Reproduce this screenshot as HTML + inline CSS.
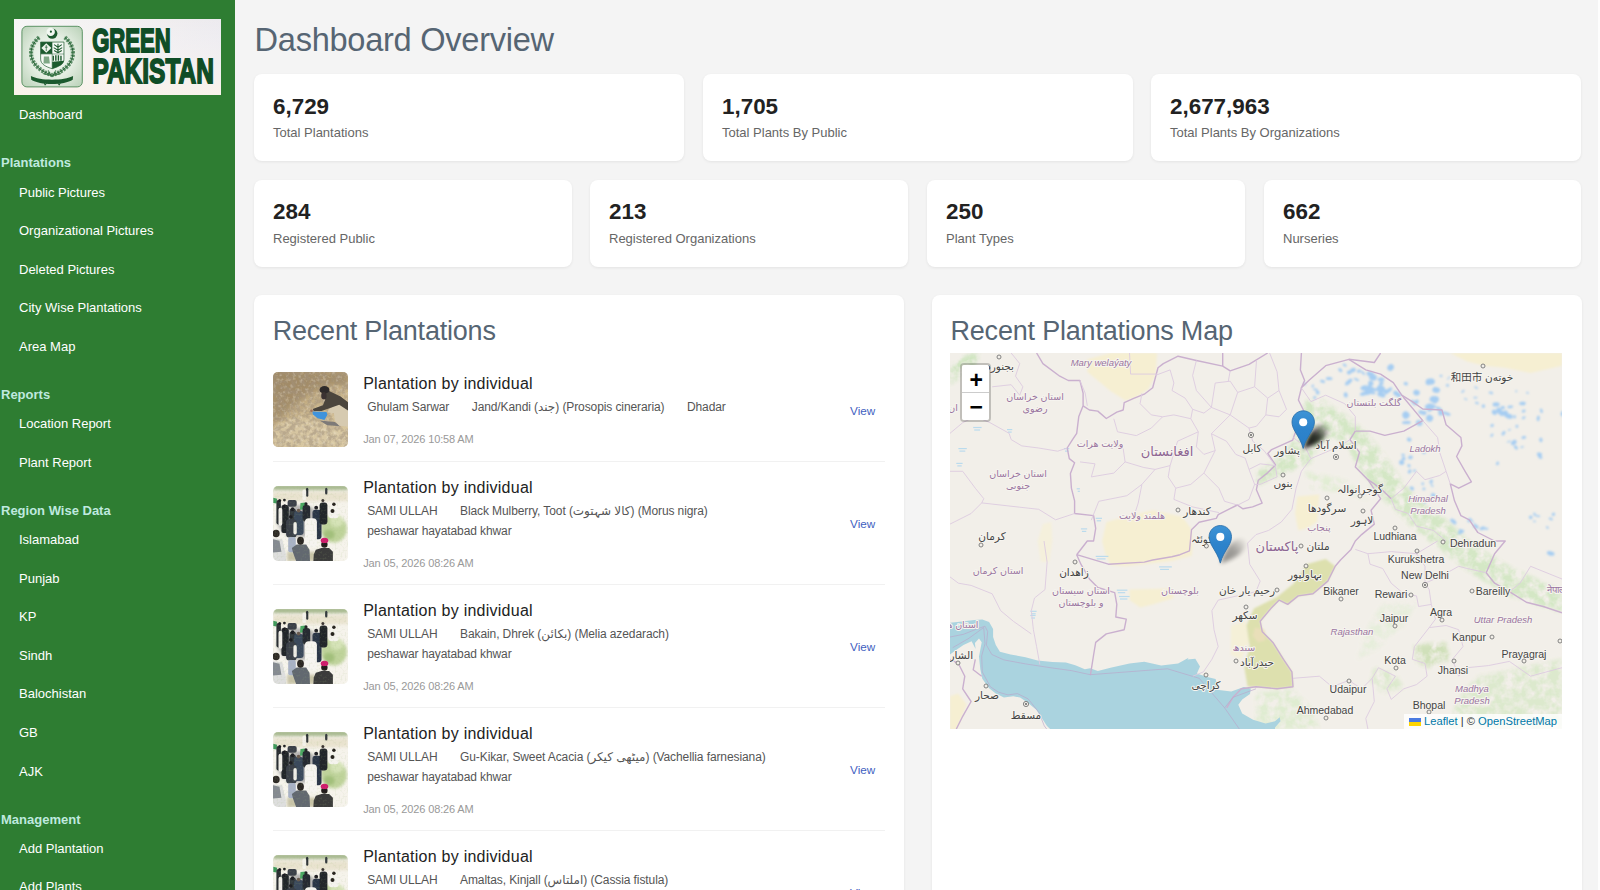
<!DOCTYPE html>
<html lang="en">
<head>
<meta charset="utf-8">
<title>Dashboard Overview</title>
<style>
*{box-sizing:border-box;margin:0;padding:0}
html,body{width:1600px;height:890px;overflow:hidden;background:#f4f4f4;font-family:"Liberation Sans","DejaVu Sans",sans-serif;color:#333}
body{position:relative}
#edge{position:absolute;right:0;top:0;width:2px;height:890px;background:#fdfdfd}
#side{position:absolute;left:0;top:0;width:235px;height:890px;background:#2e7d32;overflow:hidden}
#logo{position:absolute;left:14px;top:19px;width:207px;height:76px;overflow:hidden}
#side a{position:absolute;left:19px;color:#fff;font-size:13px;text-decoration:none;white-space:nowrap;line-height:16px}
#side h4{position:absolute;left:1px;color:#bfe9df;font-size:13px;font-weight:bold;white-space:nowrap;line-height:16px}
h1{position:absolute;left:254.6px;top:17.6px;font-size:32.6px;letter-spacing:-.28px;font-weight:normal;color:#566573;line-height:44px;white-space:nowrap}
.card{position:absolute;background:#fff;border-radius:8px;box-shadow:0 1px 3px rgba(0,0,0,.07);height:87px}
.card b{position:absolute;left:19px;top:19.7px;font-size:22.4px;line-height:26px;color:#222;white-space:nowrap}
.card span{position:absolute;left:19px;top:50px;font-size:13px;line-height:18px;color:#666;white-space:nowrap}
.panel{position:absolute;background:#fff;border-radius:8px;box-shadow:0 1px 3px rgba(0,0,0,.07);top:295px;height:620px;width:649.5px}
.panel h2{position:absolute;left:18.5px;top:18px;font-size:27px;font-weight:normal;color:#566573;line-height:36px;white-space:nowrap;letter-spacing:-.2px}
.it{position:absolute;left:19px;width:612px;border-bottom:1px solid #f1f1f1}
.it .th{position:absolute;left:0;width:75px;height:75px;border-radius:5px;overflow:hidden}
.it h3{position:absolute;left:90px;top:14px;letter-spacing:.25px;font-size:16px;font-weight:normal;color:#222;line-height:24px;white-space:nowrap}
.it .m{position:absolute;left:94px;letter-spacing:-.1px;font-size:12px;color:#555;line-height:20px;white-space:nowrap}
.it .m span{margin-right:22.5px}
.it .dt{position:absolute;left:90px;letter-spacing:-.13px;font-size:11px;color:#999;line-height:16px;white-space:nowrap}
.it .vw{position:absolute;right:10px;font-size:11.7px;color:#3f5fbf;line-height:16px;text-decoration:none}
#mapbox{position:absolute;left:18px;top:58px;width:612px;height:376px;overflow:hidden;background:#f2efe9}
#zoom{position:absolute;left:10px;top:10px;width:31px;height:59px;border:2px solid rgba(0,0,0,.2);border-radius:4px;background-clip:padding-box}
#zoom div{width:27px;height:27px;background:#fff;text-align:center;font:bold 23px/27px "Liberation Sans","DejaVu Sans",sans-serif;color:#000;position:relative;text-indent:1.5px}
#zoom div:first-child{border-bottom:1px solid #ccc;border-radius:2px 2px 0 0;height:28px;line-height:30px}
#zoom div:last-child{border-radius:0 0 2px 2px;line-height:28px}
#zoom i{position:absolute;background:#000;display:block}
#attr{position:absolute;right:0;bottom:0;height:15px;width:158px;background:rgba(255,255,255,.8);font-size:11.2px;line-height:15px;color:#333;white-space:nowrap;padding-left:20px}
#attr a{color:#0078a8;text-decoration:none}
#attr svg{position:absolute;left:5px;top:4px}
</style>
</head>
<body>
<div id="side">
  <div id="logo"><svg width="207" height="76" viewBox="0 0 207 76"><defs>
<linearGradient id="lg1" x1="0" y1="0" x2="1" y2=".6"><stop offset="0" stop-color="#f7f6f6"/><stop offset=".5" stop-color="#f1eeef"/><stop offset="1" stop-color="#e7e6ee"/></linearGradient>
<linearGradient id="lg2" x1="0" y1="0" x2="0" y2="1"><stop offset="0" stop-color="#fff" stop-opacity="0"/><stop offset="1" stop-color="#fbf3ea" stop-opacity=".9"/></linearGradient>
<radialGradient id="lg3" cx="50%" cy="50%" r="65%"><stop offset="0" stop-color="#fbfdfb"/><stop offset=".55" stop-color="#e3ede1"/><stop offset="1" stop-color="#bfd5bd"/></radialGradient>
<filter id="lgb"><feGaussianBlur stdDeviation=".35"/></filter>
</defs><rect width="207" height="76" fill="url(#lg1)"/><rect width="207" height="76" fill="url(#lg2)"/><rect x="7.9" y="7.3" width="60.4" height="60.6" rx="5" fill="url(#lg3)" stroke="#4f8a58" stroke-width=".9"/><g filter="url(#lgb)"><circle cx="38.2" cy="14.6" r="5.2" fill="#1d5a2e"/><circle cx="36.7" cy="12.9" r="4.2" fill="#f3f8f2"/><circle cx="36.89" cy="12.64" r="1.1" fill="#1d5a2e"/><path d="M25.19 18.36 C12.81 28.18 12.81 47.82 37.57 55.94" fill="none" stroke="#2f6f3e" stroke-width="4.2" stroke-dasharray="2.2 1.1" opacity=".75"/><path d="M50.81 18.36 C63.19 28.18 63.19 47.82 38.43 55.94" fill="none" stroke="#2f6f3e" stroke-width="4.2" stroke-dasharray="2.2 1.1" opacity=".75"/><path d="M25.19 18.36 C12.81 28.18 12.81 47.82 37.57 55.94" fill="none" stroke="#1d5a2e" stroke-width=".9"/><path d="M50.81 18.36 C63.19 28.18 63.19 47.82 38.43 55.94" fill="none" stroke="#1d5a2e" stroke-width=".9"/><path d="M26.64 23.06 H49.96 V40.14 C49.96 45.26 44.41 47.82 38.17 49.7 C32.02 47.82 26.64 45.26 26.64 40.14Z" fill="#f7faf6" stroke="#1d5a2e" stroke-width=".7"/><rect x="26.64" y="23.06" width="11.36" height="11.78" fill="#1d5a2e"/><path d="M32.28 24.34 L37.4 29.04 L32.28 33.73 L27.33 29.04Z" fill="#eef4ec"/><path d="M32.28 26.05 V32.02 M30.91 28.18 H33.65" stroke="#1d5a2e" stroke-width=".7"/><path d="M43.98 24.77 V34.16 M43.98 28.18 L40.14 25.62 M43.98 28.18 L47.82 25.62 M43.98 31.17 L39.71 28.61 M43.98 31.17 L48.25 28.61 M43.98 33.73 L40.14 31.6 M43.98 33.73 L47.82 31.6" stroke="#1d5a2e" stroke-width="1.1" fill="none"/><path d="M29.89 37.57 H35.01 L35.87 44.41 H29.46Z" fill="#7fa886"/><path d="M38.17 42.7 L49.96 41.84 C49.53 45.69 44.41 47.82 38.17 49.7Z" fill="#1d5a2e"/><path d="M39.28 36.72 V41.84 M41.84 36.29 V41.84 M44.41 36.29 V41.84 M46.97 36.72 V41.67" stroke="#1d5a2e" stroke-width="1.4"/><path d="M38.17 23.06 V49.7 M26.64 35.01 H49.96" stroke="#1d5a2e" stroke-width=".5"/><path d="M16.91 57.05 C25.62 61.91 50.38 61.91 59.09 57.05 L58.75 60.8 C50.38 66.44 25.62 66.44 17.25 60.8Z" fill="#1d5a2e"/><path d="M29.89 63.19 L31.17 66.18 L32.88 63.62 M43.55 63.62 L45.26 66.18 L46.54 63.19" stroke="#1d5a2e" stroke-width="1" fill="none"/><path d="M34.16 51.24 L38.0 58.07 L41.84 51.24 M29.04 54.65 L38.0 56.79 L46.97 54.65" stroke="#2f6f3e" stroke-width=".9" fill="none"/></g><g font-family="'Liberation Sans',sans-serif" font-weight="bold" fill="#0f4d26" stroke="#0f4d26" stroke-width="1.8" stroke-linejoin="miter"><text x="78.2" y="33.3" font-size="33.2" textLength="78.5" lengthAdjust="spacingAndGlyphs">GREEN</text><text x="78.4" y="64.3" font-size="35" textLength="121.5" lengthAdjust="spacingAndGlyphs">PAKISTAN</text></g></svg></div>
  <a style="top:107.4px">Dashboard</a>
  <h4 style="top:155.4px">Plantations</h4>
  <a style="top:184.6px">Public Pictures</a>
  <a style="top:223.2px">Organizational Pictures</a>
  <a style="top:261.8px">Deleted Pictures</a>
  <a style="top:300.4px">City Wise Plantations</a>
  <a style="top:339px">Area Map</a>
  <h4 style="top:387px">Reports</h4>
  <a style="top:416.2px">Location Report</a>
  <a style="top:454.8px">Plant Report</a>
  <h4 style="top:502.8px">Region Wise Data</h4>
  <a style="top:532px">Islamabad</a>
  <a style="top:570.6px">Punjab</a>
  <a style="top:609.2px">KP</a>
  <a style="top:647.8px">Sindh</a>
  <a style="top:686.4px">Balochistan</a>
  <a style="top:725px">GB</a>
  <a style="top:763.6px">AJK</a>
  <h4 style="top:811.6px">Management</h4>
  <a style="top:840.8px">Add Plantation</a>
  <a style="top:879.4px">Add Plants</a>
</div>
<h1>Dashboard Overview</h1>
<div class="card" style="left:254px;top:74px;width:430px"><b>6,729</b><span>Total Plantations</span></div>
<div class="card" style="left:703px;top:74px;width:430px"><b>1,705</b><span>Total Plants By Public</span></div>
<div class="card" style="left:1151px;top:74px;width:430px"><b>2,677,963</b><span>Total Plants By Organizations</span></div>
<div class="card" style="left:254px;top:179.6px;width:318px"><b>284</b><span>Registered Public</span></div>
<div class="card" style="left:590px;top:179.6px;width:318px"><b>213</b><span>Registered Organizations</span></div>
<div class="card" style="left:927px;top:179.6px;width:318px"><b>250</b><span>Plant Types</span></div>
<div class="card" style="left:1264px;top:179.6px;width:317px"><b>662</b><span>Nurseries</span></div>

<div class="panel" id="pl" style="left:254.2px">
  <h2>Recent Plantations</h2>
  <div class="it" style="top:62.6px;height:104px">
    <div class="th" style="top:14.4px"><svg width="75" height="75" viewBox="0 0 75 75"><defs><linearGradient id="t1g" x1="0" y1="0" x2=".6" y2="1"><stop offset="0" stop-color="#a8916a"/><stop offset=".45" stop-color="#c2ac82"/><stop offset="1" stop-color="#d9c79e"/></linearGradient><filter id="t1n" x="0" y="0" width="100%" height="100%"><feTurbulence type="fractalNoise" baseFrequency=".22" numOctaves="3" seed="3"/><feColorMatrix values="0 0 0 0 .36  0 0 0 0 .29  0 0 0 0 .21  0 0 0 3.4 -1.2"/></filter><filter id="t1m" x="0" y="0" width="100%" height="100%"><feTurbulence type="fractalNoise" baseFrequency=".3" numOctaves="2" seed="11"/><feColorMatrix values="0 0 0 0 .93  0 0 0 0 .87  0 0 0 0 .74  0 0 0 3 -1.45"/></filter><filter id="t1b"><feGaussianBlur stdDeviation=".7"/></filter><filter id="t1c"><feGaussianBlur stdDeviation="2.5"/></filter></defs><rect width="75" height="75" fill="url(#t1g)"/><polygon points="-0.0,-0.0 75.0,-0.0 75.0,13.1 56.1,13.1 35.1,21.7 17.0,36.1 -0.0,53.3" fill="#9a8462" filter="url(#t1c)" opacity=".7"/><polygon points="-0.0,54.2 23.7,44.7 44.7,48.5 75.0,61.9 75.0,75.2 -0.0,75.2" fill="#d9c9a6" filter="url(#t1c)" opacity=".8"/><rect width="75" height="75" filter="url(#t1n)" opacity=".55"/><rect width="75" height="75" filter="url(#t1m)" opacity=".3"/><g filter="url(#t1b)"><polygon points="46.6,48.5 61.9,49.9 67.6,54.2 54.2,53.3" fill="#7d7a78" /><polygon points="61.9,33.2 68.5,31.8 75.0,37.0 75.0,54.7 66.2,53.7 61.9,49.0 60.9,41.3 54.2,40.4 56.1,37.0" fill="#d6cab0" /><polygon points="48.5,21.7 56.1,18.9 67.6,24.6 75.0,30.3 75.0,38.5 66.2,32.7 57.1,36.1 48.5,39.1 40.8,39.1 39.7,37.0 49.9,33.2 52.3,27.5" fill="#4b453d" /><ellipse cx="51.5" cy="17.9" rx="5.0" ry="3.8" fill="#2d2a2a" /><ellipse cx="50.9" cy="23.7" rx="2.7" ry="3.8" fill="#3a3230" /><polygon points="39.4,39.4 53.5,39.9 54.4,42.8 51.4,48.1 44.7,46.2 39.9,42.4" fill="#3f93dc" /><circle cx="38.5" cy="38.7" r="1.3" fill="#a0705a"/></g></svg></div>
    <h3>Plantation by individual</h3>
    <div class="m" style="top:39px"><span>Ghulam Sarwar</span><span>Jand/Kandi (جند) (Prosopis cineraria)</span><span>Dhadar</span></div>
    <div class="dt" style="top:73px">Jan 07, 2026 10:58 AM</div>
    <a class="vw" style="top:45px">View</a>
  </div>
  <div class="it" style="top:166.6px;height:123.2px">
    <div class="th" style="top:24px"><svg width="75" height="75" viewBox="0 0 75 75"><defs><filter id="t2b"><feGaussianBlur stdDeviation=".75"/></filter><filter id="t2c"><feGaussianBlur stdDeviation="1.6"/></filter><filter id="t2n" x="0" y="0" width="100%" height="100%"><feTurbulence type="fractalNoise" baseFrequency=".5" numOctaves="2" seed="8"/><feColorMatrix values="0 0 0 0 .35  0 0 0 0 .5  0 0 0 0 .2  0 0 0 1.3 -.62"/></filter></defs><rect width="75" height="75" fill="#f6f3ec"/><g filter="url(#t2c)"><rect x="-0.0" y="-1.2" width="75.1" height="5.3" rx="0" fill="#93aa78" opacity=".8"/><rect x="-0.0" y="6.0" width="75.1" height="9.1" rx="0" fill="#e6dfc8" opacity=".8"/><ellipse cx="60.9" cy="42.8" rx="12.9" ry="13.8" fill="#bfd39b" /><ellipse cx="63.8" cy="35.1" rx="6.7" ry="5.7" fill="#d6e3b8" /><ellipse cx="56.1" cy="48.5" rx="5.7" ry="4.8" fill="#a3c07c" /><ellipse cx="26.5" cy="35.1" rx="22.0" ry="16.2" fill="#3a3f48" opacity=".35"/><rect x="14.1" y="65.7" width="28.7" height="9.6" rx="0" fill="#c9c4a9" /></g><g filter="url(#t2b)"><rect x="33.0" y="1.7" width="2.3" height="9.1" rx="1.5" fill="#2c3036" /><rect x="52.1" y="1.7" width="2.3" height="6.7" rx="1.5" fill="#353a40" /><rect x="29.4" y="3.6" width="3.8" height="10.5" rx="1.5" fill="#f3f1ea" /><polygon points="0.3,11.7 4.1,12.7 3.6,17.4 0.3,17.0" fill="#3f9a5c" /><polygon points="27.5,17.0 32.7,16.5 31.8,23.2 27.0,23.7" fill="#4aa862" /><rect x="3.4" y="14.1" width="4.5" height="24.4" rx="2" fill="#2a2d33" /><circle cx="6.7" cy="14.6" r="1.5" fill="#1f1f22"/><rect x="8.4" y="18.9" width="7.4" height="28.2" rx="2" fill="#23262c" /><circle cx="11.4" cy="14.1" r="1.4" fill="#1f1f22"/><circle cx="11.7" cy="20.0" r="1.7" fill="#1d1d20"/><rect x="14.6" y="14.1" width="9.1" height="6.7" rx="2" fill="#3b3f48" /><rect x="16.5" y="22.7" width="6.4" height="13.4" rx="2" fill="#33373d" /><circle cx="19.6" cy="23.2" r="1.9" fill="#1f1f22"/><rect x="21.0" y="25.1" width="9.6" height="23.9" rx="3" fill="#3a485b" /><circle cx="25.6" cy="24.6" r="1.9" fill="#6a5a50"/><rect x="29.6" y="18.9" width="7.6" height="16.7" rx="3" fill="#262a30" /><circle cx="33.0" cy="17.9" r="1.6" fill="#1f1f22"/><rect x="39.5" y="23.7" width="9.0" height="29.6" rx="3" fill="#2a3447" /><circle cx="43.2" cy="21.7" r="1.9" fill="#1f1f22"/><rect x="46.6" y="16.5" width="7.8" height="22.0" rx="3" fill="#22252b" /><circle cx="49.9" cy="14.6" r="1.5" fill="#3a3430"/><rect x="55.6" y="20.8" width="10.0" height="11.5" rx="3" fill="#f5f3ee" /><circle cx="60.9" cy="18.2" r="1.7" fill="#25221f"/><circle cx="59.5" cy="25.1" r="2.0" fill="#25221f"/><rect x="5.5" y="21.7" width="3.8" height="18.1" rx="2" fill="#f1efe9" /><rect x="13.1" y="33.2" width="10.5" height="18.3" rx="3" fill="#3a4049" /><rect x="20.4" y="36.1" width="3.4" height="12.4" rx="2" fill="#f0eee8" /><rect x="15.2" y="50.9" width="7.6" height="15.3" rx="2" fill="#a9b2c6" /><circle cx="17.9" cy="30.8" r="1.9" fill="#1f1f22"/><rect x="31.9" y="32.2" width="12.0" height="28.7" rx="4" fill="#f6f4f0" /><ellipse cx="51.4" cy="58.5" rx="3.2" ry="3.2" fill="#241f1d" /><ellipse cx="51.5" cy="54.4" rx="3.8" ry="2.7" fill="#cf1f6c" /><polygon points="42.8,63.8 48.5,61.9 56.1,61.9 59.9,65.7 59.9,75.2 40.4,75.2 40.8,68.5" fill="#3a3a3a" /><polygon points="18.9,61.9 23.7,58.5 33.2,58.5 36.5,63.8 37.0,75.2 23.2,75.2 20.0,66.6" fill="#62686f" /><ellipse cx="27.5" cy="54.7" rx="3.4" ry="4.0" fill="#2b2724" /><polygon points="-0.0,52.3 9.3,53.3 12.7,67.6 13.1,75.2 -0.0,75.2" fill="#dedede" /><polygon points="-0.0,53.3 6.5,54.7 8.4,65.7 -0.0,66.6" fill="#868b92" /><ellipse cx="3.1" cy="47.5" rx="3.6" ry="3.8" fill="#2e2a28" /></g><rect width="75" height="75" filter="url(#t2n)" opacity=".35"/></svg></div>
    <h3>Plantation by individual</h3>
    <div class="m" style="top:39px"><span>SAMI ULLAH</span><span>Black Mulberry, Toot (کالا شہتوت) (Morus nigra)</span><br>peshawar hayatabad khwar</div>
    <div class="dt" style="top:93px">Jan 05, 2026 08:26 AM</div>
    <a class="vw" style="top:54px">View</a>
  </div>
  <div class="it" style="top:289.8px;height:123.2px">
    <div class="th" style="top:24px"><svg width="75" height="75" viewBox="0 0 75 75"><defs><filter id="t2b"><feGaussianBlur stdDeviation=".75"/></filter><filter id="t2c"><feGaussianBlur stdDeviation="1.6"/></filter><filter id="t2n" x="0" y="0" width="100%" height="100%"><feTurbulence type="fractalNoise" baseFrequency=".5" numOctaves="2" seed="8"/><feColorMatrix values="0 0 0 0 .35  0 0 0 0 .5  0 0 0 0 .2  0 0 0 1.3 -.62"/></filter></defs><rect width="75" height="75" fill="#f6f3ec"/><g filter="url(#t2c)"><rect x="-0.0" y="-1.2" width="75.1" height="5.3" rx="0" fill="#93aa78" opacity=".8"/><rect x="-0.0" y="6.0" width="75.1" height="9.1" rx="0" fill="#e6dfc8" opacity=".8"/><ellipse cx="60.9" cy="42.8" rx="12.9" ry="13.8" fill="#bfd39b" /><ellipse cx="63.8" cy="35.1" rx="6.7" ry="5.7" fill="#d6e3b8" /><ellipse cx="56.1" cy="48.5" rx="5.7" ry="4.8" fill="#a3c07c" /><ellipse cx="26.5" cy="35.1" rx="22.0" ry="16.2" fill="#3a3f48" opacity=".35"/><rect x="14.1" y="65.7" width="28.7" height="9.6" rx="0" fill="#c9c4a9" /></g><g filter="url(#t2b)"><rect x="33.0" y="1.7" width="2.3" height="9.1" rx="1.5" fill="#2c3036" /><rect x="52.1" y="1.7" width="2.3" height="6.7" rx="1.5" fill="#353a40" /><rect x="29.4" y="3.6" width="3.8" height="10.5" rx="1.5" fill="#f3f1ea" /><polygon points="0.3,11.7 4.1,12.7 3.6,17.4 0.3,17.0" fill="#3f9a5c" /><polygon points="27.5,17.0 32.7,16.5 31.8,23.2 27.0,23.7" fill="#4aa862" /><rect x="3.4" y="14.1" width="4.5" height="24.4" rx="2" fill="#2a2d33" /><circle cx="6.7" cy="14.6" r="1.5" fill="#1f1f22"/><rect x="8.4" y="18.9" width="7.4" height="28.2" rx="2" fill="#23262c" /><circle cx="11.4" cy="14.1" r="1.4" fill="#1f1f22"/><circle cx="11.7" cy="20.0" r="1.7" fill="#1d1d20"/><rect x="14.6" y="14.1" width="9.1" height="6.7" rx="2" fill="#3b3f48" /><rect x="16.5" y="22.7" width="6.4" height="13.4" rx="2" fill="#33373d" /><circle cx="19.6" cy="23.2" r="1.9" fill="#1f1f22"/><rect x="21.0" y="25.1" width="9.6" height="23.9" rx="3" fill="#3a485b" /><circle cx="25.6" cy="24.6" r="1.9" fill="#6a5a50"/><rect x="29.6" y="18.9" width="7.6" height="16.7" rx="3" fill="#262a30" /><circle cx="33.0" cy="17.9" r="1.6" fill="#1f1f22"/><rect x="39.5" y="23.7" width="9.0" height="29.6" rx="3" fill="#2a3447" /><circle cx="43.2" cy="21.7" r="1.9" fill="#1f1f22"/><rect x="46.6" y="16.5" width="7.8" height="22.0" rx="3" fill="#22252b" /><circle cx="49.9" cy="14.6" r="1.5" fill="#3a3430"/><rect x="55.6" y="20.8" width="10.0" height="11.5" rx="3" fill="#f5f3ee" /><circle cx="60.9" cy="18.2" r="1.7" fill="#25221f"/><circle cx="59.5" cy="25.1" r="2.0" fill="#25221f"/><rect x="5.5" y="21.7" width="3.8" height="18.1" rx="2" fill="#f1efe9" /><rect x="13.1" y="33.2" width="10.5" height="18.3" rx="3" fill="#3a4049" /><rect x="20.4" y="36.1" width="3.4" height="12.4" rx="2" fill="#f0eee8" /><rect x="15.2" y="50.9" width="7.6" height="15.3" rx="2" fill="#a9b2c6" /><circle cx="17.9" cy="30.8" r="1.9" fill="#1f1f22"/><rect x="31.9" y="32.2" width="12.0" height="28.7" rx="4" fill="#f6f4f0" /><ellipse cx="51.4" cy="58.5" rx="3.2" ry="3.2" fill="#241f1d" /><ellipse cx="51.5" cy="54.4" rx="3.8" ry="2.7" fill="#cf1f6c" /><polygon points="42.8,63.8 48.5,61.9 56.1,61.9 59.9,65.7 59.9,75.2 40.4,75.2 40.8,68.5" fill="#3a3a3a" /><polygon points="18.9,61.9 23.7,58.5 33.2,58.5 36.5,63.8 37.0,75.2 23.2,75.2 20.0,66.6" fill="#62686f" /><ellipse cx="27.5" cy="54.7" rx="3.4" ry="4.0" fill="#2b2724" /><polygon points="-0.0,52.3 9.3,53.3 12.7,67.6 13.1,75.2 -0.0,75.2" fill="#dedede" /><polygon points="-0.0,53.3 6.5,54.7 8.4,65.7 -0.0,66.6" fill="#868b92" /><ellipse cx="3.1" cy="47.5" rx="3.6" ry="3.8" fill="#2e2a28" /></g><rect width="75" height="75" filter="url(#t2n)" opacity=".35"/></svg></div>
    <h3>Plantation by individual</h3>
    <div class="m" style="top:39px"><span>SAMI ULLAH</span><span>Bakain, Dhrek (بکائن) (Melia azedarach)</span><br>peshawar hayatabad khwar</div>
    <div class="dt" style="top:93px">Jan 05, 2026 08:26 AM</div>
    <a class="vw" style="top:54px">View</a>
  </div>
  <div class="it" style="top:413px;height:123.2px">
    <div class="th" style="top:24px"><svg width="75" height="75" viewBox="0 0 75 75"><defs><filter id="t2b"><feGaussianBlur stdDeviation=".75"/></filter><filter id="t2c"><feGaussianBlur stdDeviation="1.6"/></filter><filter id="t2n" x="0" y="0" width="100%" height="100%"><feTurbulence type="fractalNoise" baseFrequency=".5" numOctaves="2" seed="8"/><feColorMatrix values="0 0 0 0 .35  0 0 0 0 .5  0 0 0 0 .2  0 0 0 1.3 -.62"/></filter></defs><rect width="75" height="75" fill="#f6f3ec"/><g filter="url(#t2c)"><rect x="-0.0" y="-1.2" width="75.1" height="5.3" rx="0" fill="#93aa78" opacity=".8"/><rect x="-0.0" y="6.0" width="75.1" height="9.1" rx="0" fill="#e6dfc8" opacity=".8"/><ellipse cx="60.9" cy="42.8" rx="12.9" ry="13.8" fill="#bfd39b" /><ellipse cx="63.8" cy="35.1" rx="6.7" ry="5.7" fill="#d6e3b8" /><ellipse cx="56.1" cy="48.5" rx="5.7" ry="4.8" fill="#a3c07c" /><ellipse cx="26.5" cy="35.1" rx="22.0" ry="16.2" fill="#3a3f48" opacity=".35"/><rect x="14.1" y="65.7" width="28.7" height="9.6" rx="0" fill="#c9c4a9" /></g><g filter="url(#t2b)"><rect x="33.0" y="1.7" width="2.3" height="9.1" rx="1.5" fill="#2c3036" /><rect x="52.1" y="1.7" width="2.3" height="6.7" rx="1.5" fill="#353a40" /><rect x="29.4" y="3.6" width="3.8" height="10.5" rx="1.5" fill="#f3f1ea" /><polygon points="0.3,11.7 4.1,12.7 3.6,17.4 0.3,17.0" fill="#3f9a5c" /><polygon points="27.5,17.0 32.7,16.5 31.8,23.2 27.0,23.7" fill="#4aa862" /><rect x="3.4" y="14.1" width="4.5" height="24.4" rx="2" fill="#2a2d33" /><circle cx="6.7" cy="14.6" r="1.5" fill="#1f1f22"/><rect x="8.4" y="18.9" width="7.4" height="28.2" rx="2" fill="#23262c" /><circle cx="11.4" cy="14.1" r="1.4" fill="#1f1f22"/><circle cx="11.7" cy="20.0" r="1.7" fill="#1d1d20"/><rect x="14.6" y="14.1" width="9.1" height="6.7" rx="2" fill="#3b3f48" /><rect x="16.5" y="22.7" width="6.4" height="13.4" rx="2" fill="#33373d" /><circle cx="19.6" cy="23.2" r="1.9" fill="#1f1f22"/><rect x="21.0" y="25.1" width="9.6" height="23.9" rx="3" fill="#3a485b" /><circle cx="25.6" cy="24.6" r="1.9" fill="#6a5a50"/><rect x="29.6" y="18.9" width="7.6" height="16.7" rx="3" fill="#262a30" /><circle cx="33.0" cy="17.9" r="1.6" fill="#1f1f22"/><rect x="39.5" y="23.7" width="9.0" height="29.6" rx="3" fill="#2a3447" /><circle cx="43.2" cy="21.7" r="1.9" fill="#1f1f22"/><rect x="46.6" y="16.5" width="7.8" height="22.0" rx="3" fill="#22252b" /><circle cx="49.9" cy="14.6" r="1.5" fill="#3a3430"/><rect x="55.6" y="20.8" width="10.0" height="11.5" rx="3" fill="#f5f3ee" /><circle cx="60.9" cy="18.2" r="1.7" fill="#25221f"/><circle cx="59.5" cy="25.1" r="2.0" fill="#25221f"/><rect x="5.5" y="21.7" width="3.8" height="18.1" rx="2" fill="#f1efe9" /><rect x="13.1" y="33.2" width="10.5" height="18.3" rx="3" fill="#3a4049" /><rect x="20.4" y="36.1" width="3.4" height="12.4" rx="2" fill="#f0eee8" /><rect x="15.2" y="50.9" width="7.6" height="15.3" rx="2" fill="#a9b2c6" /><circle cx="17.9" cy="30.8" r="1.9" fill="#1f1f22"/><rect x="31.9" y="32.2" width="12.0" height="28.7" rx="4" fill="#f6f4f0" /><ellipse cx="51.4" cy="58.5" rx="3.2" ry="3.2" fill="#241f1d" /><ellipse cx="51.5" cy="54.4" rx="3.8" ry="2.7" fill="#cf1f6c" /><polygon points="42.8,63.8 48.5,61.9 56.1,61.9 59.9,65.7 59.9,75.2 40.4,75.2 40.8,68.5" fill="#3a3a3a" /><polygon points="18.9,61.9 23.7,58.5 33.2,58.5 36.5,63.8 37.0,75.2 23.2,75.2 20.0,66.6" fill="#62686f" /><ellipse cx="27.5" cy="54.7" rx="3.4" ry="4.0" fill="#2b2724" /><polygon points="-0.0,52.3 9.3,53.3 12.7,67.6 13.1,75.2 -0.0,75.2" fill="#dedede" /><polygon points="-0.0,53.3 6.5,54.7 8.4,65.7 -0.0,66.6" fill="#868b92" /><ellipse cx="3.1" cy="47.5" rx="3.6" ry="3.8" fill="#2e2a28" /></g><rect width="75" height="75" filter="url(#t2n)" opacity=".35"/></svg></div>
    <h3>Plantation by individual</h3>
    <div class="m" style="top:39px"><span>SAMI ULLAH</span><span>Gu-Kikar, Sweet Acacia (میٹھی کیکر) (Vachellia farnesiana)</span><br>peshawar hayatabad khwar</div>
    <div class="dt" style="top:93px">Jan 05, 2026 08:26 AM</div>
    <a class="vw" style="top:54px">View</a>
  </div>
  <div class="it" style="top:536.2px;height:123.2px">
    <div class="th" style="top:24px"><svg width="75" height="75" viewBox="0 0 75 75"><defs><filter id="t2b"><feGaussianBlur stdDeviation=".75"/></filter><filter id="t2c"><feGaussianBlur stdDeviation="1.6"/></filter><filter id="t2n" x="0" y="0" width="100%" height="100%"><feTurbulence type="fractalNoise" baseFrequency=".5" numOctaves="2" seed="8"/><feColorMatrix values="0 0 0 0 .35  0 0 0 0 .5  0 0 0 0 .2  0 0 0 1.3 -.62"/></filter></defs><rect width="75" height="75" fill="#f6f3ec"/><g filter="url(#t2c)"><rect x="-0.0" y="-1.2" width="75.1" height="5.3" rx="0" fill="#93aa78" opacity=".8"/><rect x="-0.0" y="6.0" width="75.1" height="9.1" rx="0" fill="#e6dfc8" opacity=".8"/><ellipse cx="60.9" cy="42.8" rx="12.9" ry="13.8" fill="#bfd39b" /><ellipse cx="63.8" cy="35.1" rx="6.7" ry="5.7" fill="#d6e3b8" /><ellipse cx="56.1" cy="48.5" rx="5.7" ry="4.8" fill="#a3c07c" /><ellipse cx="26.5" cy="35.1" rx="22.0" ry="16.2" fill="#3a3f48" opacity=".35"/><rect x="14.1" y="65.7" width="28.7" height="9.6" rx="0" fill="#c9c4a9" /></g><g filter="url(#t2b)"><rect x="33.0" y="1.7" width="2.3" height="9.1" rx="1.5" fill="#2c3036" /><rect x="52.1" y="1.7" width="2.3" height="6.7" rx="1.5" fill="#353a40" /><rect x="29.4" y="3.6" width="3.8" height="10.5" rx="1.5" fill="#f3f1ea" /><polygon points="0.3,11.7 4.1,12.7 3.6,17.4 0.3,17.0" fill="#3f9a5c" /><polygon points="27.5,17.0 32.7,16.5 31.8,23.2 27.0,23.7" fill="#4aa862" /><rect x="3.4" y="14.1" width="4.5" height="24.4" rx="2" fill="#2a2d33" /><circle cx="6.7" cy="14.6" r="1.5" fill="#1f1f22"/><rect x="8.4" y="18.9" width="7.4" height="28.2" rx="2" fill="#23262c" /><circle cx="11.4" cy="14.1" r="1.4" fill="#1f1f22"/><circle cx="11.7" cy="20.0" r="1.7" fill="#1d1d20"/><rect x="14.6" y="14.1" width="9.1" height="6.7" rx="2" fill="#3b3f48" /><rect x="16.5" y="22.7" width="6.4" height="13.4" rx="2" fill="#33373d" /><circle cx="19.6" cy="23.2" r="1.9" fill="#1f1f22"/><rect x="21.0" y="25.1" width="9.6" height="23.9" rx="3" fill="#3a485b" /><circle cx="25.6" cy="24.6" r="1.9" fill="#6a5a50"/><rect x="29.6" y="18.9" width="7.6" height="16.7" rx="3" fill="#262a30" /><circle cx="33.0" cy="17.9" r="1.6" fill="#1f1f22"/><rect x="39.5" y="23.7" width="9.0" height="29.6" rx="3" fill="#2a3447" /><circle cx="43.2" cy="21.7" r="1.9" fill="#1f1f22"/><rect x="46.6" y="16.5" width="7.8" height="22.0" rx="3" fill="#22252b" /><circle cx="49.9" cy="14.6" r="1.5" fill="#3a3430"/><rect x="55.6" y="20.8" width="10.0" height="11.5" rx="3" fill="#f5f3ee" /><circle cx="60.9" cy="18.2" r="1.7" fill="#25221f"/><circle cx="59.5" cy="25.1" r="2.0" fill="#25221f"/><rect x="5.5" y="21.7" width="3.8" height="18.1" rx="2" fill="#f1efe9" /><rect x="13.1" y="33.2" width="10.5" height="18.3" rx="3" fill="#3a4049" /><rect x="20.4" y="36.1" width="3.4" height="12.4" rx="2" fill="#f0eee8" /><rect x="15.2" y="50.9" width="7.6" height="15.3" rx="2" fill="#a9b2c6" /><circle cx="17.9" cy="30.8" r="1.9" fill="#1f1f22"/><rect x="31.9" y="32.2" width="12.0" height="28.7" rx="4" fill="#f6f4f0" /><ellipse cx="51.4" cy="58.5" rx="3.2" ry="3.2" fill="#241f1d" /><ellipse cx="51.5" cy="54.4" rx="3.8" ry="2.7" fill="#cf1f6c" /><polygon points="42.8,63.8 48.5,61.9 56.1,61.9 59.9,65.7 59.9,75.2 40.4,75.2 40.8,68.5" fill="#3a3a3a" /><polygon points="18.9,61.9 23.7,58.5 33.2,58.5 36.5,63.8 37.0,75.2 23.2,75.2 20.0,66.6" fill="#62686f" /><ellipse cx="27.5" cy="54.7" rx="3.4" ry="4.0" fill="#2b2724" /><polygon points="-0.0,52.3 9.3,53.3 12.7,67.6 13.1,75.2 -0.0,75.2" fill="#dedede" /><polygon points="-0.0,53.3 6.5,54.7 8.4,65.7 -0.0,66.6" fill="#868b92" /><ellipse cx="3.1" cy="47.5" rx="3.6" ry="3.8" fill="#2e2a28" /></g><rect width="75" height="75" filter="url(#t2n)" opacity=".35"/></svg></div>
    <h3>Plantation by individual</h3>
    <div class="m" style="top:39px"><span>SAMI ULLAH</span><span>Amaltas, Kinjall (املتاس) (Cassia fistula)</span><br>peshawar hayatabad khwar</div>
    <div class="dt" style="top:93px">Jan 05, 2026 08:26 AM</div>
    <a class="vw" style="top:54px">View</a>
  </div>
</div>

<div class="panel" id="pm" style="left:932px">
  <h2>Recent Plantations Map</h2>
  <div id="mapbox">
<svg id="map" width="612" height="376" viewBox="0 0 612 376">
<defs>
<filter id="b2" x="-20%" y="-20%" width="140%" height="140%"><feGaussianBlur stdDeviation="2.2"/></filter>
<filter id="b1s" x="-40%" y="-40%" width="180%" height="180%"><feGaussianBlur stdDeviation="2.1"/></filter>
<linearGradient id="shg" gradientUnits="userSpaceOnUse" x1="14" y1="40" x2="38" y2="17"><stop offset="0" stop-color="#000" stop-opacity="1"/><stop offset=".55" stop-color="#000" stop-opacity=".8"/><stop offset="1" stop-color="#000" stop-opacity=".1"/></linearGradient>
<filter id="b1" x="-20%" y="-20%" width="140%" height="140%"><feGaussianBlur stdDeviation="0.8"/></filter>
<filter id="b4" x="-30%" y="-30%" width="160%" height="160%"><feGaussianBlur stdDeviation="3.5"/></filter>
<filter id="gt" x="-5%" y="-5%" width="110%" height="110%"><feGaussianBlur in="SourceGraphic" stdDeviation="2" result="b"/><feTurbulence type="fractalNoise" baseFrequency="0.11" numOctaves="3" seed="4" result="n"/><feColorMatrix in="n" type="matrix" values="0 0 0 0 0  0 0 0 0 0  0 0 0 0 0  0 0 0 2.6 -0.65" result="a"/><feComposite in="b" in2="a" operator="in"/></filter>
<linearGradient id="pin" x1="0" y1="0" x2="0" y2="1"><stop offset="0" stop-color="#3f94d6"/><stop offset=".5" stop-color="#2d83cb"/><stop offset="1" stop-color="#2a7fc8"/></linearGradient>
<radialGradient id="sh" cx="50%" cy="50%" r="50%"><stop offset="0" stop-color="#000" stop-opacity=".55"/><stop offset="1" stop-color="#000" stop-opacity="0"/></radialGradient>
</defs>
<style>
#map .cb{fill:none;stroke:#cab0cf;stroke-width:1.4;stroke-linejoin:round}
#map .pb{fill:none;stroke:#dccbe0;stroke-width:.9;stroke-linejoin:round}
#map .mb{fill:none;stroke:#b9a5c9;stroke-width:.8;stroke-linejoin:round;opacity:.8}
#map text{font-family:"Liberation Sans","DejaVu Sans","Noto Sans CJK SC",sans-serif;text-anchor:middle;paint-order:stroke;stroke:#f6f4ef;stroke-width:2px;stroke-linejoin:round}
#map .c{font-size:10.5px;fill:#444}
#map .p{font-size:9.5px;fill:#9a74a0}
#map .pi{font-size:9.5px;fill:#9a74a0;font-style:italic}
#map .n{font-size:13px;fill:#8e6693}
#map .dot{fill:#f2efe9;stroke:#777;stroke-width:.9}
</style>
<rect width="612" height="376" fill="#f2efe9"/>
<g filter="url(#b1)">
<path d="M137.3 6.3 L160.5 0.0 L207.0 0.0 L205.9 21.1 L198.5 35.9 L185.9 44.4 L175.3 47.5 L160.5 38.0 L147.8 27.5 L137.3 19.0Z" fill="#f6efd2" />
<path d="M156.3 169.0 L175.3 163.7 L202.7 157.3 L232.3 163.7 L240.8 175.3 L242.9 188.0 L241.8 202.7 L221.8 208.0 L194.3 211.2 L175.3 213.3 L160.5 212.2 L155.2 200.6 L152.1 188.0Z" fill="#f6efd2" />
<path d="M92.9 171.1 L101.4 169.0 L102.4 188.0 L99.3 209.1 L90.8 209.1 L87.6 188.0Z" fill="#f5f0dc" />
<path d="M179.5 236.6 L221.8 235.5 L223.9 245.0 L202.7 251.4 L190.1 254.5 L179.5 247.1Z" fill="#f6efd2" />
<path d="M500.3 0.0 L612.0 0.0 L612.0 12.7 L580.6 20.1 L555.2 14.8 L534.1 12.7 L517.2 8.4Z" fill="#f6efd2" />
<path d="M347.2 143.6 L369.4 141.5 L367.2 169.0 L356.7 175.3 L348.2 177.4 L345.1 160.5Z" fill="#f6efd2" />
<path d="M280.9 272.5 L295.7 268.3 L299.9 287.3 L291.4 306.3 L280.9 302.0Z" fill="#f5f0d8" />
</g>
<g filter="url(#gt)" opacity=".95">
<path d="M354.6 48.6 L369.4 45.4 L394.7 61.2 L415.8 78.1 L436.9 105.6 L453.8 130.9 L475.0 152.1 L496.1 166.8 L519.3 188.0 L555.2 211.2 L612.0 238.6 L612.0 259.8 L559.4 242.9 L517.2 217.5 L487.6 194.3 L466.5 177.4 L449.6 162.6 L432.7 145.7 L415.8 126.7 L403.1 105.6 L394.7 88.7 L382.0 84.5 L369.4 90.8 L360.9 109.8 L337.7 119.3 L306.0 133.1 L306.0 118.3 L335.6 101.4 L348.2 73.9Z" fill="#d3e7c4" />
<path d="M354.6 118.3 L394.7 126.7 L420.0 147.8 L394.7 139.4 L360.9 135.2Z" fill="#e1edd3" />
<path d="M464.4 291.5 L496.1 289.4 L500.3 306.3 L479.2 314.7 L466.5 310.5Z" fill="#cfe0b8" />
<path d="M527.8 323.2 L570.0 314.7 L612.0 306.3 L612.0 376.0 L496.1 376.0 L508.7 344.3Z" fill="#dbe9cc" />
<path d="M424.3 314.7 L445.4 318.9 L453.8 335.8 L432.7 340.1 L420.0 327.4Z" fill="#dbe9cc" />
<path d="M306.0 340.1 L341.9 335.8 L360.9 354.8 L369.4 376.0 L306.0 376.0Z" fill="#dfecd0" />
<path d="M432.7 251.4 L466.5 249.2 L453.8 272.5 L424.3 297.8 L407.4 306.3 L415.8 276.7Z" fill="#e6eedb" />
<path d="M0.0 12.7 L12.7 4.2 L21.1 0.0 L29.6 0.0 L25.3 12.7 L0.0 31.7Z" fill="#cfe5c0" />
</g>
<path d="M375.7 206.0 L385.2 213.3 L377.8 228.1 L363.0 240.8 L348.2 242.9 L337.7 251.4 L329.2 247.1 L320.8 255.6 L310.2 268.3 L312.3 278.8 L322.9 289.4 L333.5 306.3 L341.9 318.9 L343.0 333.7 L327.1 335.8 L306.0 333.7 L297.6 333.7 L294.4 314.7 L299.7 293.6 L296.5 272.5 L303.9 255.6 L327.1 244.0 L344.0 230.2 L356.7 211.2Z" fill="#dde0ae" filter="url(#b1)"/>
<path d="M304.9 274.6 L314.4 276.7 L315.5 287.3 L308.1 289.4 L302.8 283.0Z" fill="#e9dfb9" filter="url(#b1)"/>
<path d="M0.0 269.8 L12.1 268.5 L24.3 267.1 L32.3 266.4 L39.1 269.1 L43.1 275.9 L43.1 284.0 L45.8 292.0 L49.9 298.8 L60.6 301.5 L75.5 304.2 L87.6 307.5 L102.4 308.9 L115.9 309.6 L125.3 312.3 L134.8 316.3 L140.2 315.2 L147.8 317.9 L160.5 314.7 L179.5 310.5 L194.3 308.8 L211.2 312.6 L228.1 310.5 L238.6 304.8 L237.5 306.5 L245.3 305.8 L250 313.6 L246.9 320.6 L256.3 323.7 L265.6 326 L268.8 337 L281.3 338.6 L293.8 333.9 L300.8 335.4 L300 340.9 L292.2 346.4 L288.3 351.8 L292.2 360.4 L303.1 366.7 L315.6 370.6 L325 368.3 L329.7 364.3 L330.5 368.3 L325 374.5 L325 377 L102.4 378.3 L97.0 372.9 L91.6 364.8 L86.3 356.7 L78.2 350.0 L70.1 344.6 L63.3 343.3 L53.9 344.6 L45.8 340.6 L39.1 335.2 L32.3 325.7 L30.3 316.3 L29.0 303.5 L31.7 289.3 L29.0 285.6 L24.9 290.0 L25.6 296.1 L21.6 288.3 L13.5 292.0 L5.4 297.4 L0.0 301.5Z" fill="#aad3df" />
<path d="M0.0 343.3 L8.1 340.6 L16.8 351.3 L11.5 364.8 L6.1 378.3 L0.0 378.3Z" fill="#f6efd2" filter="url(#b1)"/>
<g fill="#a6cdf2" filter="url(#b1)">
<ellipse cx="421.0" cy="36.0" rx="4.2" ry="1.4" transform="rotate(18 421.0 36.0)"/>
<ellipse cx="438.2" cy="37.9" rx="5.1" ry="1.8" transform="rotate(-39 438.2 37.9)"/>
<ellipse cx="419.9" cy="33.0" rx="2.0" ry="2.3" transform="rotate(22 419.9 33.0)"/>
<ellipse cx="430.7" cy="35.9" rx="4.1" ry="3.7" transform="rotate(23 430.7 35.9)"/>
<ellipse cx="420.8" cy="30.3" rx="2.5" ry="2.7" transform="rotate(-33 420.8 30.3)"/>
<ellipse cx="422.5" cy="36.2" rx="2.1" ry="2.0" transform="rotate(37 422.5 36.2)"/>
<ellipse cx="431.3" cy="41.8" rx="4.1" ry="2.2" transform="rotate(20 431.3 41.8)"/>
<ellipse cx="420.4" cy="21.1" rx="4.0" ry="2.5" transform="rotate(18 420.4 21.1)"/>
<ellipse cx="414.4" cy="34.9" rx="3.9" ry="2.4" transform="rotate(-12 414.4 34.9)"/>
<ellipse cx="424.3" cy="37.0" rx="4.7" ry="1.4" transform="rotate(-12 424.3 37.0)"/>
<ellipse cx="398.7" cy="29.0" rx="4.5" ry="1.9" transform="rotate(-41 398.7 29.0)"/>
<ellipse cx="434.0" cy="37.6" rx="4.6" ry="1.6" transform="rotate(12 434.0 37.6)"/>
<ellipse cx="395.7" cy="41.9" rx="2.0" ry="2.7" transform="rotate(-10 395.7 41.9)"/>
<ellipse cx="418.0" cy="38.3" rx="3.6" ry="3.3" transform="rotate(-42 418.0 38.3)"/>
<ellipse cx="440.6" cy="14.5" rx="3.5" ry="3.0" transform="rotate(-43 440.6 14.5)"/>
<ellipse cx="423.0" cy="24.5" rx="3.9" ry="3.0" transform="rotate(7 423.0 24.5)"/>
<ellipse cx="421.6" cy="39.8" rx="4.2" ry="1.2" transform="rotate(9 421.6 39.8)"/>
<ellipse cx="413.6" cy="40.8" rx="3.6" ry="1.8" transform="rotate(-14 413.6 40.8)"/>
<ellipse cx="430.8" cy="36.3" rx="3.2" ry="3.5" transform="rotate(-40 430.8 36.3)"/>
<ellipse cx="430.7" cy="39.1" rx="2.7" ry="1.5" transform="rotate(5 430.7 39.1)"/>
<ellipse cx="431.0" cy="26.5" rx="3.3" ry="2.1" transform="rotate(-2 431.0 26.5)"/>
<ellipse cx="431.3" cy="30.4" rx="2.4" ry="1.8" transform="rotate(-21 431.3 30.4)"/>
<ellipse cx="490.3" cy="58.5" rx="2.3" ry="1.8" transform="rotate(-32 490.3 58.5)"/>
<ellipse cx="455.9" cy="62.0" rx="3.6" ry="3.4" transform="rotate(38 455.9 62.0)"/>
<ellipse cx="486.2" cy="37.0" rx="3.9" ry="2.9" transform="rotate(8 486.2 37.0)"/>
<ellipse cx="484.3" cy="46.2" rx="4.6" ry="3.1" transform="rotate(0 484.3 46.2)"/>
<ellipse cx="456.3" cy="63.3" rx="3.3" ry="2.1" transform="rotate(-26 456.3 63.3)"/>
<ellipse cx="474.4" cy="60.0" rx="2.2" ry="2.0" transform="rotate(-44 474.4 60.0)"/>
<ellipse cx="479.6" cy="65.2" rx="3.5" ry="3.4" transform="rotate(28 479.6 65.2)"/>
<ellipse cx="492.0" cy="60.5" rx="3.8" ry="1.5" transform="rotate(-18 492.0 60.5)"/>
<ellipse cx="483.0" cy="53.1" rx="3.3" ry="1.5" transform="rotate(12 483.0 53.1)"/>
<ellipse cx="480.7" cy="56.5" rx="3.3" ry="1.4" transform="rotate(-37 480.7 56.5)"/>
<ellipse cx="466.5" cy="39.7" rx="3.3" ry="2.8" transform="rotate(16 466.5 39.7)"/>
<ellipse cx="497.3" cy="60.8" rx="3.5" ry="1.5" transform="rotate(19 497.3 60.8)"/>
<ellipse cx="484.8" cy="47.9" rx="2.7" ry="2.7" transform="rotate(-39 484.8 47.9)"/>
<ellipse cx="463.2" cy="49.3" rx="2.9" ry="1.6" transform="rotate(48 463.2 49.3)"/>
<ellipse cx="469.2" cy="70.0" rx="3.4" ry="2.7" transform="rotate(28 469.2 70.0)"/>
<ellipse cx="480.3" cy="28.7" rx="4.6" ry="3.1" transform="rotate(1 480.3 28.7)"/>
<ellipse cx="465.9" cy="49.5" rx="3.4" ry="2.0" transform="rotate(-47 465.9 49.5)"/>
<ellipse cx="488.9" cy="55.8" rx="3.3" ry="1.6" transform="rotate(27 488.9 55.8)"/>
<ellipse cx="479.8" cy="53.9" rx="4.9" ry="3.5" transform="rotate(-4 479.8 53.9)"/>
<ellipse cx="471.7" cy="59.4" rx="3.3" ry="2.0" transform="rotate(11 471.7 59.4)"/>
<ellipse cx="447.2" cy="41.1" rx="4.5" ry="2.3" transform="rotate(33 447.2 41.1)"/>
<ellipse cx="456.4" cy="69.6" rx="4.5" ry="1.5" transform="rotate(-1 456.4 69.6)"/>
<ellipse cx="394.7" cy="12.1" rx="2.3" ry="1.2" transform="rotate(31 394.7 12.1)"/>
<ellipse cx="379.2" cy="25.6" rx="3.3" ry="1.5" transform="rotate(1 379.2 25.6)"/>
<ellipse cx="390.3" cy="17.2" rx="1.6" ry="2.4" transform="rotate(-47 390.3 17.2)"/>
<ellipse cx="406.5" cy="26.5" rx="3.0" ry="1.1" transform="rotate(26 406.5 26.5)"/>
<ellipse cx="408.9" cy="18.2" rx="2.0" ry="1.7" transform="rotate(-34 408.9 18.2)"/>
<ellipse cx="413.0" cy="20.0" rx="2.8" ry="1.0" transform="rotate(45 413.0 20.0)"/>
<ellipse cx="402.8" cy="17.2" rx="3.1" ry="2.1" transform="rotate(-23 402.8 17.2)"/>
<ellipse cx="399.1" cy="19.5" rx="2.3" ry="2.0" transform="rotate(-9 399.1 19.5)"/>
<ellipse cx="364.7" cy="44.7" rx="1.3" ry="1.9" transform="rotate(-5 364.7 44.7)"/>
<ellipse cx="372.6" cy="28.4" rx="2.6" ry="1.4" transform="rotate(14 372.6 28.4)"/>
<ellipse cx="367.6" cy="39.5" rx="2.0" ry="1.9" transform="rotate(49 367.6 39.5)"/>
<ellipse cx="365.4" cy="36.6" rx="2.6" ry="1.0" transform="rotate(10 365.4 36.6)"/>
<ellipse cx="362.8" cy="33.0" rx="1.2" ry="1.6" transform="rotate(17 362.8 33.0)"/>
<ellipse cx="354.7" cy="30.9" rx="1.3" ry="1.5" transform="rotate(-19 354.7 30.9)"/>
<ellipse cx="459.0" cy="112.7" rx="1.5" ry="1.7" transform="rotate(-47 459.0 112.7)"/>
<ellipse cx="459.2" cy="86.6" rx="2.4" ry="2.0" transform="rotate(14 459.2 86.6)"/>
<ellipse cx="453.6" cy="105.5" rx="2.0" ry="1.8" transform="rotate(11 453.6 105.5)"/>
<ellipse cx="451.7" cy="109.4" rx="2.6" ry="2.4" transform="rotate(-17 451.7 109.4)"/>
<ellipse cx="473.9" cy="99.4" rx="1.8" ry="1.7" transform="rotate(3 473.9 99.4)"/>
<ellipse cx="464.6" cy="117.7" rx="1.5" ry="1.3" transform="rotate(-41 464.6 117.7)"/>
<ellipse cx="459.7" cy="118.5" rx="1.6" ry="2.3" transform="rotate(41 459.7 118.5)"/>
<ellipse cx="453.1" cy="101.9" rx="1.9" ry="1.1" transform="rotate(9 453.1 101.9)"/>
<ellipse cx="462.0" cy="135.4" rx="2.3" ry="1.8" transform="rotate(35 462.0 135.4)"/>
<ellipse cx="460.5" cy="104.4" rx="2.4" ry="1.8" transform="rotate(-7 460.5 104.4)"/>
<ellipse cx="473.9" cy="135.9" rx="1.5" ry="1.4" transform="rotate(-7 473.9 135.9)"/>
<ellipse cx="472.7" cy="130.8" rx="1.3" ry="1.4" transform="rotate(29 472.7 130.8)"/>
<ellipse cx="474.6" cy="148.5" rx="1.5" ry="2.2" transform="rotate(-21 474.6 148.5)"/>
<ellipse cx="482.1" cy="132.5" rx="1.8" ry="0.9" transform="rotate(49 482.1 132.5)"/>
<ellipse cx="483.6" cy="142.7" rx="3.0" ry="2.1" transform="rotate(36 483.6 142.7)"/>
<ellipse cx="481.2" cy="128.6" rx="1.6" ry="2.2" transform="rotate(23 481.2 128.6)"/>
<ellipse cx="544.4" cy="59.3" rx="2.2" ry="2.8" transform="rotate(-27 544.4 59.3)"/>
<ellipse cx="553.6" cy="60.2" rx="4.4" ry="2.4" transform="rotate(-17 553.6 60.2)"/>
<ellipse cx="588.2" cy="65.4" rx="1.5" ry="2.9" transform="rotate(8 588.2 65.4)"/>
<ellipse cx="613.6" cy="60.6" rx="2.7" ry="3.1" transform="rotate(29 613.6 60.6)"/>
<ellipse cx="573.7" cy="64.8" rx="2.1" ry="1.1" transform="rotate(-30 573.7 64.8)"/>
<ellipse cx="558.6" cy="63.1" rx="4.4" ry="2.4" transform="rotate(17 558.6 63.1)"/>
<ellipse cx="560.3" cy="53.9" rx="3.0" ry="1.3" transform="rotate(-6 560.3 53.9)"/>
<ellipse cx="577.5" cy="39.8" rx="1.4" ry="0.9" transform="rotate(14 577.5 39.8)"/>
<ellipse cx="549.0" cy="57.8" rx="2.9" ry="3.1" transform="rotate(-37 549.0 57.8)"/>
<ellipse cx="546.1" cy="51.4" rx="3.5" ry="2.2" transform="rotate(0 546.1 51.4)"/>
<ellipse cx="573.7" cy="58.1" rx="2.0" ry="1.4" transform="rotate(-25 573.7 58.1)"/>
<ellipse cx="572.5" cy="50.5" rx="3.4" ry="1.8" transform="rotate(-6 572.5 50.5)"/>
<ellipse cx="591.4" cy="57.8" rx="1.3" ry="2.4" transform="rotate(-18 591.4 57.8)"/>
<ellipse cx="554.3" cy="60.0" rx="3.5" ry="1.8" transform="rotate(14 554.3 60.0)"/>
<ellipse cx="552.8" cy="54.6" rx="2.1" ry="1.6" transform="rotate(8 552.8 54.6)"/>
<ellipse cx="564.7" cy="63.7" rx="1.3" ry="1.7" transform="rotate(-8 564.7 63.7)"/>
<ellipse cx="590.9" cy="86.9" rx="1.6" ry="2.3" transform="rotate(-11 590.9 86.9)"/>
<ellipse cx="572.1" cy="94.0" rx="1.8" ry="0.9" transform="rotate(-15 572.1 94.0)"/>
<ellipse cx="558.7" cy="88.6" rx="2.2" ry="0.7" transform="rotate(-17 558.7 88.6)"/>
<ellipse cx="573.8" cy="84.4" rx="2.4" ry="1.4" transform="rotate(-12 573.8 84.4)"/>
<ellipse cx="565.9" cy="94.5" rx="2.4" ry="1.6" transform="rotate(46 565.9 94.5)"/>
<ellipse cx="590.0" cy="103.5" rx="2.9" ry="1.7" transform="rotate(47 590.0 103.5)"/>
<ellipse cx="547.5" cy="110.4" rx="1.4" ry="1.9" transform="rotate(32 547.5 110.4)"/>
<ellipse cx="589.4" cy="101.1" rx="2.7" ry="1.6" transform="rotate(4 589.4 101.1)"/>
<ellipse cx="566.9" cy="73.3" rx="1.4" ry="1.6" transform="rotate(14 566.9 73.3)"/>
<ellipse cx="541.9" cy="82.2" rx="1.1" ry="1.9" transform="rotate(41 541.9 82.2)"/>
<ellipse cx="559.4" cy="76.9" rx="1.6" ry="0.8" transform="rotate(-33 559.4 76.9)"/>
<ellipse cx="542.1" cy="72.5" rx="1.9" ry="1.5" transform="rotate(-44 542.1 72.5)"/>
<ellipse cx="553.5" cy="80.2" rx="2.6" ry="1.5" transform="rotate(-50 553.5 80.2)"/>
<ellipse cx="563.8" cy="89.6" rx="3.2" ry="2.2" transform="rotate(-39 563.8 89.6)"/>
<ellipse cx="513.0" cy="38.3" rx="2.1" ry="0.9" transform="rotate(-41 513.0 38.3)"/>
<ellipse cx="526.0" cy="34.6" rx="2.1" ry="0.9" transform="rotate(33 526.0 34.6)"/>
<ellipse cx="541.6" cy="40.0" rx="1.5" ry="1.2" transform="rotate(37 541.6 40.0)"/>
<ellipse cx="515.7" cy="46.1" rx="1.9" ry="0.8" transform="rotate(26 515.7 46.1)"/>
<ellipse cx="526.9" cy="50.0" rx="2.1" ry="1.0" transform="rotate(22 526.9 50.0)"/>
<ellipse cx="533.4" cy="53.1" rx="1.7" ry="1.7" transform="rotate(-38 533.4 53.1)"/>
<ellipse cx="505.9" cy="24.5" rx="1.3" ry="1.2" transform="rotate(9 505.9 24.5)"/>
<ellipse cx="482.0" cy="46.8" rx="2.5" ry="1.2" transform="rotate(-11 482.0 46.8)"/>
<ellipse cx="566.3" cy="38.2" rx="0.9" ry="1.1" transform="rotate(14 566.3 38.2)"/>
<ellipse cx="539.8" cy="39.5" rx="1.3" ry="0.8" transform="rotate(-24 539.8 39.5)"/>
<ellipse cx="525.4" cy="44.7" rx="2.1" ry="0.9" transform="rotate(-4 525.4 44.7)"/>
<ellipse cx="543.5" cy="59.6" rx="1.7" ry="1.6" transform="rotate(40 543.5 59.6)"/>
<ellipse cx="511.1" cy="179.0" rx="3.5" ry="1.6" transform="rotate(-30 511.1 179.0)"/>
<ellipse cx="531.6" cy="175.4" rx="2.4" ry="1.4" transform="rotate(-32 531.6 175.4)"/>
<ellipse cx="510.4" cy="177.4" rx="1.6" ry="1.5" transform="rotate(-9 510.4 177.4)"/>
<ellipse cx="519.4" cy="167.2" rx="1.6" ry="2.5" transform="rotate(41 519.4 167.2)"/>
<ellipse cx="536.6" cy="175.8" rx="1.9" ry="1.0" transform="rotate(-1 536.6 175.8)"/>
<ellipse cx="533.4" cy="175.2" rx="2.2" ry="1.6" transform="rotate(-15 533.4 175.2)"/>
<ellipse cx="524.5" cy="172.6" rx="1.4" ry="2.1" transform="rotate(31 524.5 172.6)"/>
<ellipse cx="526.7" cy="174.0" rx="1.9" ry="1.8" transform="rotate(-26 526.7 174.0)"/>
<ellipse cx="522.0" cy="168.0" rx="2.4" ry="0.9" transform="rotate(47 522.0 168.0)"/>
<ellipse cx="503.4" cy="168.4" rx="3.7" ry="1.9" transform="rotate(42 503.4 168.4)"/>
<ellipse cx="616.9" cy="176.4" rx="1.8" ry="1.6" transform="rotate(-33 616.9 176.4)"/>
<ellipse cx="584.7" cy="161.4" rx="1.1" ry="2.0" transform="rotate(-34 584.7 161.4)"/>
<ellipse cx="597.4" cy="174.5" rx="1.6" ry="1.1" transform="rotate(44 597.4 174.5)"/>
<ellipse cx="600.8" cy="165.9" rx="2.3" ry="1.1" transform="rotate(21 600.8 165.9)"/>
<ellipse cx="588.0" cy="163.1" rx="2.3" ry="0.8" transform="rotate(14 588.0 163.1)"/>
<ellipse cx="603.4" cy="161.3" rx="1.5" ry="1.9" transform="rotate(47 603.4 161.3)"/>
<ellipse cx="584.5" cy="168.3" rx="1.4" ry="0.9" transform="rotate(-7 584.5 168.3)"/>
<ellipse cx="580.7" cy="164.3" rx="1.8" ry="1.8" transform="rotate(-25 580.7 164.3)"/>
<ellipse cx="491.0" cy="22.9" rx="1.5" ry="1.1" transform="rotate(17 491.0 22.9)"/>
<ellipse cx="477.5" cy="30.7" rx="2.1" ry="1.2" transform="rotate(23 477.5 30.7)"/>
<ellipse cx="481.4" cy="27.0" rx="1.7" ry="1.3" transform="rotate(-23 481.4 27.0)"/>
<ellipse cx="497.5" cy="32.4" rx="1.5" ry="1.4" transform="rotate(5 497.5 32.4)"/>
<ellipse cx="498.6" cy="25.1" rx="2.3" ry="0.6" transform="rotate(-46 498.6 25.1)"/>
<ellipse cx="455.8" cy="30.7" rx="2.2" ry="1.7" transform="rotate(12 455.8 30.7)"/>
<ellipse cx="601.7" cy="200.7" rx="2.8" ry="1.9" transform="rotate(9 601.7 200.7)"/>
<ellipse cx="600.6" cy="200.1" rx="1.5" ry="1.1" transform="rotate(16 600.6 200.1)"/>
<ellipse cx="599.4" cy="200.3" rx="2.7" ry="1.7" transform="rotate(47 599.4 200.3)"/>
<ellipse cx="598.9" cy="199.6" rx="2.6" ry="0.9" transform="rotate(-34 598.9 199.6)"/>
</g>
<g fill="#b5d9ee" opacity=".9">
<rect x="8.4" y="95.0" width="8.4" height="1.2"/><rect x="9.4" y="97.5" width="5.9" height="1.2"/>
<rect x="6.3" y="109.8" width="6.3" height="1.2"/><rect x="7.3" y="112.3" width="4.4" height="1.2"/>
<rect x="23.2" y="73.9" width="8.4" height="1.2"/><rect x="24.2" y="76.4" width="5.9" height="1.2"/>
<rect x="57.0" y="76.0" width="5.3" height="1.2"/><rect x="58.0" y="78.5" width="3.7" height="1.2"/>
<rect x="114.0" y="95.0" width="5.3" height="1.2"/><rect x="115.0" y="97.5" width="3.7" height="1.2"/>
<rect x="145.7" y="164.7" width="6.3" height="1.2"/><rect x="146.7" y="167.2" width="4.4" height="1.2"/>
<rect x="130.9" y="175.3" width="6.3" height="1.2"/><rect x="131.9" y="177.8" width="4.4" height="1.2"/>
<rect x="126.7" y="135.2" width="3.2" height="1.2"/><rect x="127.7" y="137.7" width="2.2" height="1.2"/>
<rect x="145.7" y="202.8" width="12.7" height="1.2"/><rect x="146.7" y="205.3" width="8.9" height="1.2"/>
<rect x="209.1" y="213.3" width="12.7" height="1.2"/><rect x="210.1" y="215.8" width="8.9" height="1.2"/>
<rect x="166.8" y="236.6" width="10.6" height="1.2"/><rect x="167.8" y="239.1" width="7.4" height="1.2"/>
<rect x="169.0" y="242.9" width="10.6" height="1.2"/><rect x="170.0" y="245.4" width="7.4" height="1.2"/>
<rect x="80.3" y="257.7" width="6.3" height="1.2"/><rect x="81.3" y="260.2" width="4.4" height="1.2"/>
<rect x="80.3" y="261.9" width="5.3" height="1.2"/><rect x="81.3" y="264.4" width="3.7" height="1.2"/>
</g>
<path d="M86.6 0.0 L92.9 10.6 L109.8 23.2 L118.3 27.5 L129.9 27.5 L133.1 40.1 L133.1 52.8 L128.8 63.4 L126.7 80.3 L122.5 86.6 L117.2 95.0 L119.3 105.6 L124.6 109.8 L120.4 120.4 L121.4 135.2 L124.6 147.8 L124.6 160.5 L143.6 162.6 L145.7 175.3 L143.6 188.0 L137.3 188.0 L126.7 201.7" class="cb"/>
<path d="M133.1 52.8 L139.4 57.0 L147.8 58.1 L156.3 65.5 L166.8 59.1 L173.2 57.0 L174.2 49.6 L183.7 45.4 L194.3 41.2 L202.7 34.8 L208.0 14.8 L213.3 10.6 L228.1 3.2 L246.4 7.5 L272.7 13.1 L280.2 17.8 L299 11.3 L317.7 0" class="cb"/>
<path d="M272.7 0 L272.7 13.1" class="cb"/>
<path d="M126.7 201.7 L158.4 211.2 L194.3 209.1 L202.7 207.0 L221.8 203.8 L230 201.7 L239.5 197.8 L241.5 176.8 L249.1 169.2 L266.3 165.4 L268.2 161.6 L287.3 152 L293 155.8 L302.6 153.9 L312.1 150.1 L306.4 136.7 L308.3 127.2 L317.8 119.6 L325.5 111.9 L317.8 100.5 L321.6 96.6 L342.7 87.1 L344.6 81.4 L354.1 58.5 L348.4 47 L351.4 34.8" class="cb"/>
<path d="M126.7 201.7 L130.9 211.2 L139.4 226.0 L147.8 234.5 L164.7 239.7 L166.8 251.4 L165.8 264.0 L176.3 266.1 L174.2 276.7 L156.3 280.9 L145.7 289.4 L143.6 302.0 L140.4 322.1" class="cb"/>
<path d="M351.4 0.0 L350.4 16.9 L354.6 27.5 L351.4 34.8 L358.8 27.5 L375.7 12.7 L398.9 6.3 L424.3 9.5 L430.6 0.0" class="cb"/>
<path d="M398.9 6.3 L415.8 16.9 L430.6 21.1 L443.3 29.6 L451.7 42.2 L462.3 48.6 L472.8 56.0 L491.9 57.0 L496.1 71.8 L510.9 84.5 L511.9 92.9 L506.6 103.5 L515.1 118.3 L521.4 128.8 L508.7 135.2 L500.3 130.9 L504.5 147.8 L510.9 162.6 L519.3 166.8 L527.8 179.5 L544.6 188.0 L555.2 188.0 L544.6 200.7 L536.2 219.7 L544.6 230.2 L559.4 238.7 L576.3 249.2 L593.2 253.5 L612.0 259.8" class="cb"/>
<path d="M451.7 42.2 L472.8 67.6 L453.8 78.1 L434.8 82.4 L420.0 78.1 L405.3 78.1 L400.0 86.6 L409.5 99.3 L405.3 114.0 L417.9 126.7 L430.6 145.7 L421.1 157.3 L424.3 171.1 L411.6 181.6 L405.3 188.0 L405.3 188.0 L401.0 196.4 L390.5 207.0 L385.2 213.3 L377.8 228.1 L363.0 240.8 L348.2 242.9 L337.7 251.4 L329.2 247.1 L320.8 255.6 L310.2 268.3 L312.3 278.8 L322.9 289.4 L333.5 306.3 L341.9 318.9 L343.0 333.7 L327.1 335.8 L306.0 333.7 L306.0 333.7 L291.4 335.8 L283.0 344.3 L276.7 354.8" class="cb"/>
<path d="M417.9 126.7 L424.3 130.9 L434.8 139.4 L441.2 145.7" class="cb"/>
<path d="M0.0 306.3 L8.4 310.5 L14.8 323.2 L12.7 335.8 L21.1 348.5 L12.7 363.3 L6.3 376.0" class="cb"/>
<path d="M25.3 306.3 L23.2 316.8 L31.7 323.2" class="cb"/>
<path d="M0.0 284.0 L13.5 281.3 L27.0 275.9 L35.0 273.2 L37.7 278.6 L36.4 292.0 L41.8 301.5 L53.9 306.9 L75.5 310.9 L102.4 315.0 L121.3 317.6 L140.2 321.7 L217.5 315.8 L249.2 325.3 L274.6 354.8 L289.3 376.0" class="mb"/>
<path d="M2.7 294.7 L18.9 285.3 L33.7 274.5 L35.0 290.7 L31.7 302.8 L32.3 319.0 L40.4 333.8 L48.5 339.2 L58.0 341.9 L67.4 340.6 L78.2 345.9 L88.9 359.4 L94.3 372.9 L98.4 378.3" class="mb"/>
<path d="M274.6 354.8 L283.0 344.3 L306.0 335.8" class="mb"/>
<path d="M40.1 69.7 L59.1 80.3 L61.2 86.6 L71.8 92.9 L88.7 95.0 L107.7 98.2 L117.2 95.0" class="pb"/>
<path d="M61.2 0.0 L69.7 10.6 L65.5 23.2 L72.9 33.8 L69.7 42.2 L61.2 31.7 L42.2 33.8" class="pb"/>
<path d="M0.0 118.3 L12.7 118.3 L25.3 135.2 L33.8 145.7 L31.7 149.9 L69.7 154.2 L88.7 156.3 L105.6 166.8 L124.6 160.5" class="pb"/>
<path d="M31.7 149.9 L21.1 160.5 L0.0 171.1" class="pb"/>
<path d="M0.0 80.3 L12.7 69.7 L25.3 63.4 L40.1 69.7" class="pb"/>
<path d="M94.0 188.0 L97.1 209.1 L95.0 236.6 L84.5 245.0 L81.3 257.7 L83.4 276.7 L86.6 293.6 L89.8 311.5" class="pb"/>
<path d="M0.0 223.9 L8.4 230.2 L21.1 232.4 L42.2 240.8 L50.7 257.7 L63.4 268.3 L81.3 280.9" class="pb"/>
<path d="M205.1 22.5 L220.1 16.9 L223.9 30.0 L222.0 37.5 L235.1 45.1 L242.6 56.3 L240.8 65.7 L248.3 78.8 L246.4 93.9 L253.9 101.4 L265.2 97.6" class="pb"/>
<path d="M191.9 40.4 L190.1 50.7 L201.3 61.9 L212.6 63.8 L223.9 61.9 L240.8 65.7" class="pb"/>
<path d="M163.8 65.7 L167.5 78.8 L186.3 82.6 L201.3 75.1 L212.6 63.8" class="pb"/>
<path d="M246.4 7.5 L242.6 22.5 L246.4 37.5 L261.4 54.4 L253.9 60.1 L242.6 56.3" class="pb"/>
<path d="M261.4 54.4 L265.2 30.0 L280.2 28.2 L287.7 39.4 L280.2 61.9 L261.4 54.4" class="pb"/>
<path d="M280.2 17.8 L278.3 28.2" class="pb"/>
<path d="M287.7 39.4 L304.6 33.8 L317.7 45.1 L315.8 61.9 L306.5 73.2 L299.0 75.1 L280.2 61.9" class="pb"/>
<path d="M304.6 33.8 L306.5 7.5" class="pb"/>
<path d="M317.7 45.1 L329.0 37.5 L327.1 18.8 L319.6 0.0" class="pb"/>
<path d="M261.4 80.7 L276.4 88.2 L285.8 101.4 L295.2 105.1 L299.0 116.4 L310.2 110.8 L325.2 112.6" class="pb"/>
<path d="M265.2 97.6 L261.4 80.7 L280.2 61.9" class="pb"/>
<path d="M248.3 78.8 L227.6 88.2 L220.1 112.6 L205.1 116.4 L193.8 114.5 L175.1 108.9 L173.2 95.7 L161.9 90.1" class="pb"/>
<path d="M220.1 112.6 L218.2 123.9 L225.7 135.2 L240.8 131.4 L253.9 120.1 L265.2 97.6" class="pb"/>
<path d="M253.9 120.1 L268.9 135.2 L274.5 148.3 L287.7 152.1 L299.0 146.4 L304.6 131.4 L299.0 116.4" class="pb"/>
<path d="M205.1 116.4 L191.9 131.4 L188.2 150.2 L182.6 167.1" class="pb"/>
<path d="M225.7 135.2 L223.9 146.4 L242.6 153.9 L268.9 159.6" class="pb"/>
<path d="M175.1 108.9 L163.8 120.1 L141.3 123.9 L145.0 110.8 L130.0 108.9" class="pb"/>
<path d="M191.9 131.4 L176.9 142.7 L148.8 148.3 L141.3 167.1" class="pb"/>
<path d="M299.0 75.1 L302.7 88.2 L314.0 97.6 L325.2 112.6" class="pb"/>
<path d="M315.8 61.9 L329.0 63.8 L336.5 56.3 L329.0 37.5" class="pb"/>
<path d="M325.2 112.6 L327.1 123.9 L310.2 131.4 L304.6 131.4" class="pb"/>
<path d="M179.5 0.0 L180.6 21.1 L207.0 21.1" class="pb"/>
<path d="M129.9 27.5 L135.2 40.1 L137.3 52.8" class="pb"/>
<path d="M306.0 238.7 L268.2 247.1 L261.9 257.7 L264.0 276.7 L268.2 293.6 L261.9 306.3 L253.4 318.9 L242.9 323.2" class="pb"/>
<path d="M343.0 84.5 L354.6 92.9 L360.9 105.6 L351.4 118.3 L346.1 135.2 L341.9 156.3 L331.3 169.0 L318.7 177.4 L306.0 181.6" class="pb"/>
<path d="M360.9 105.6 L375.7 99.3 L390.5 92.9 L400.0 86.6" class="pb"/>
<path d="M351.4 34.8 L360.9 48.6 L375.7 42.2 L394.7 50.7 L405.3 63.4 L405.3 78.1" class="pb"/>
<path d="M306.0 181.6 L297.6 190.1 L299.7 211.2 L310.2 228.1 L306.0 238.6" class="pb"/>
<path d="M441.2 145.7 L445.4 156.3 L458.1 160.5 L466.5 173.2 L483.4 177.4 L496.1 188.0" class="pb"/>
<path d="M472.8 67.6 L487.6 84.5 L489.7 99.3 L496.1 118.3 L500.3 130.9" class="pb"/>
<path d="M441.2 145.7 L453.8 135.2 L466.5 118.3 L475.0 126.7 L489.7 122.5 L496.1 118.3" class="pb"/>
<path d="M405.3 196.4 L417.9 200.7 L420.0 211.2 L432.7 215.5 L441.2 230.2 L453.8 240.8 L466.5 242.9 L468.6 253.5 L481.3 251.4 L479.2 236.6 L475.0 230.2" class="pb"/>
<path d="M417.9 200.7 L441.2 198.6 L466.5 200.7 L475.0 213.3 L475.0 230.2" class="pb"/>
<path d="M466.5 200.7 L487.6 188.0" class="pb"/>
<path d="M475.0 230.2 L489.7 223.9 L508.7 213.3 L517.2 215.5 L536.2 219.7" class="pb"/>
<path d="M481.3 251.4 L485.5 266.1 L479.2 274.6 L496.1 272.5 L508.7 276.7 L513.0 293.6 L502.4 306.3 L508.7 323.2 L517.2 314.7 L538.3 312.6 L559.4 308.4 L580.6 323.2 L612.0 314.7" class="pb"/>
<path d="M479.2 274.6 L464.4 293.6 L462.3 306.3 L475.0 310.5 L477.1 323.2 L466.5 331.6 L453.8 335.8 L441.2 346.4 L436.9 335.8 L445.4 323.2 L428.5 314.7 L422.2 325.3 L424.3 348.5 L415.8 365.4 L417.9 376.0" class="pb"/>
<path d="M343.0 325.3 L369.4 323.2 L382.0 333.7 L398.9 327.4 L411.6 335.8 L422.2 325.3" class="pb"/>
<path d="M559.4 238.7 L570.0 230.2 L580.6 213.3 L612.0 226.0" class="pb"/>
<text x="50" y="17" class="c" >بجنورد</text>
<circle cx="49" cy="4" r="2" class="dot"/>
<text x="151" y="13" class="pi" >Mary welaýaty</text>
<text x="532" y="28" class="c" >和田市 خوتەن</text>
<circle cx="533" cy="13" r="2" class="dot"/>
<text x="85" y="47" class="p" >استان خراسان</text>
<text x="85" y="59" class="p" >رضوی</text>
<text x="150" y="94" class="p" >ولایت هرات</text>
<text x="217" y="103" class="n" >افغانستان</text>
<text x="302" y="99" class="c" >کابل</text>
<circle cx="301" cy="82" r="2.6" class="dot"/><circle cx="301" cy="82" r="1" fill="#666"/>
<text x="337" y="101" class="c" >پشاور</text>
<text x="386" y="96" class="c" >اسلام آباد</text>
<circle cx="386" cy="104" r="2.6" class="dot"/><circle cx="386" cy="104" r="1" fill="#666"/>
<text x="475" y="99" class="pi" >Ladokh</text>
<text x="424" y="53" class="p" >گلگت بلتستان</text>
<text x="68" y="124" class="p" >استان خراسان</text>
<text x="68" y="136" class="p" >جنوبی</text>
<text x="333" y="134" class="c" >بنوں</text>
<circle cx="333" cy="122" r="2" class="dot"/>
<text x="410" y="140" class="c" >گوجرانوالہ</text>
<circle cx="410" cy="143" r="2" class="dot"/>
<text x="377" y="159" class="c" >سرگودها</text>
<circle cx="377" cy="145" r="2" class="dot"/>
<text x="412" y="171" class="c" >لاہور</text>
<circle cx="413" cy="158" r="2" class="dot"/>
<text x="478" y="149" class="pi" >Himachal</text>
<text x="478" y="161" class="pi" >Pradesh</text>
<text x="247" y="162" class="c" >کندهار</text>
<circle cx="228" cy="157" r="2" class="dot"/>
<text x="192" y="166" class="p" >هلمند ولایت</text>
<text x="369" y="178" class="p" >پنجاب</text>
<text x="42" y="187" class="c" >کرمان</text>
<circle cx="31" cy="192" r="2" class="dot"/>
<text x="252" y="190" class="c" >کوئٹہ</text>
<circle cx="256.4" cy="193" r="2" class="dot"/>
<text x="327" y="198" class="n" >پاکستان</text>
<text x="368" y="197" class="c" >ملتان</text>
<circle cx="351" cy="193" r="2" class="dot"/>
<text x="445" y="187" class="c" >Ludhiana</text>
<circle cx="445" cy="175" r="2" class="dot"/>
<text x="523" y="194" class="c" >Dehradun</text>
<circle cx="493" cy="189" r="2" class="dot"/>
<text x="466" y="210" class="c" >Kurukshetra</text>
<circle cx="467" cy="198" r="2" class="dot"/>
<text x="48" y="221" class="p" >استان کرمان</text>
<text x="124" y="223" class="c" >زاهدان</text>
<circle cx="125" cy="209" r="2" class="dot"/>
<text x="355" y="225" class="c" >بہاولپور</text>
<circle cx="356" cy="213" r="2" class="dot"/>
<text x="475" y="226" class="c" >New Delhi</text>
<circle cx="475" cy="232" r="2.6" class="dot"/><circle cx="475" cy="232" r="1" fill="#666"/>
<text x="131" y="241" class="p" >استان سیستان</text>
<text x="131" y="253" class="p" >و بلوچستان</text>
<text x="230" y="241" class="p" >بلوچستان</text>
<text x="297" y="241" class="c" >رحیم یار خان</text>
<circle cx="327" cy="237" r="2" class="dot"/>
<text x="391" y="242" class="c" >Bikaner</text>
<circle cx="391" cy="246" r="2" class="dot"/>
<text x="441" y="245" class="c" >Rewari</text>
<circle cx="461" cy="242" r="2" class="dot"/>
<text x="543" y="242" class="c" >Bareilly</text>
<circle cx="522" cy="238" r="2" class="dot"/>
<text x="606" y="240" class="p" >नेपाल</text>
<text x="295" y="266" class="c" >سکھر</text>
<circle cx="296" cy="254" r="2" class="dot"/>
<text x="444" y="269" class="c" >Jaipur</text>
<circle cx="445" cy="273" r="2" class="dot"/>
<text x="491" y="263" class="c" >Agra</text>
<circle cx="492" cy="267" r="2" class="dot"/>
<text x="553" y="270" class="pi" >Uttar Pradesh</text>
<text x="402" y="282" class="pi" >Rajasthan</text>
<text x="519" y="288" class="c" >Kanpur</text>
<circle cx="542" cy="284" r="2" class="dot"/>
<text x="294" y="298" class="p" >سندھ</text>
<text x="307" y="313" class="c" >حیدرآباد</text>
<circle cx="286" cy="308" r="2" class="dot"/>
<text x="574" y="305" class="c" >Prayagraj</text>
<circle cx="574" cy="308" r="2" class="dot"/>
<text x="445" y="311" class="c" >Kota</text>
<circle cx="446" cy="315" r="2" class="dot"/>
<text x="503" y="321" class="c" >Jhansi</text>
<circle cx="504" cy="308" r="2" class="dot"/>
<text x="256" y="336" class="c" >کراچی</text>
<circle cx="256" cy="322" r="2" class="dot"/>
<text x="398" y="340" class="c" >Udaipur</text>
<circle cx="399" cy="328" r="2" class="dot"/>
<text x="522" y="339" class="pi" >Madhya</text>
<text x="522" y="351" class="pi" >Pradesh</text>
<text x="479" y="356" class="c" >Bhopal</text>
<circle cx="479" cy="359" r="2" class="dot"/>
<text x="375" y="361" class="c" >Ahmedabad</text>
<circle cx="376" cy="365" r="2" class="dot"/>
<text x="6" y="306" class="c" >الشارقة</text>
<circle cx="8" cy="310" r="2" class="dot"/>
<text x="37" y="346" class="c" >صحار</text>
<circle cx="36" cy="333" r="2" class="dot"/>
<text x="76" y="366" class="c" >مسقط</text>
<circle cx="76" cy="351" r="2.6" class="dot"/><circle cx="76" cy="351" r="1" fill="#666"/>
<text x="-2" y="275" class="p" >استان هرمزگان</text>
<text x="3" y="58" class="p" >ان</text>
<circle cx="610" cy="288" r="2" class="dot"/>
<g transform="translate(353.2 95.8) scale(.94) translate(-12.5 -41)"><path d="M12.5 41 L18 28 C22 20 30 13 36.5 14.5 C43 17 39 26 33 31 C27 36 18 39.5 12.5 41Z" fill="url(#shg)" opacity="0.95" filter="url(#b1s)"/><path d="M12.5 40.6 C11 34 7 28 3.5 22 C1.5 18.5 .6 15.5 .6 12.5 C.6 5.9 5.9 .6 12.5 .6 C19.1 .6 24.4 5.9 24.4 12.5 C24.4 15.5 23.5 18.5 21.5 22 C18 28 14 34 12.5 40.6Z" fill="url(#pin)" stroke="#2a6eab" stroke-width=".9"/><circle cx="12.5" cy="12.7" r="4.3" fill="#fff"/></g>
<g transform="translate(270.3 210.5) scale(.94) translate(-12.5 -41)"><path d="M12.5 41 L18 28 C22 20 30 13 36.5 14.5 C43 17 39 26 33 31 C27 36 18 39.5 12.5 41Z" fill="url(#shg)" opacity="0.42" filter="url(#b1s)"/><path d="M12.5 40.6 C11 34 7 28 3.5 22 C1.5 18.5 .6 15.5 .6 12.5 C.6 5.9 5.9 .6 12.5 .6 C19.1 .6 24.4 5.9 24.4 12.5 C24.4 15.5 23.5 18.5 21.5 22 C18 28 14 34 12.5 40.6Z" fill="url(#pin)" stroke="#2a6eab" stroke-width=".9"/><circle cx="12.5" cy="12.7" r="4.3" fill="#fff"/></g>
</svg>
    <div id="zoom"><div>+</div><div>&#x2212;</div></div>
    <div id="attr"><svg width="12" height="8" viewBox="0 0 12 8"><rect width="12" height="4" fill="#4c7be1"/><rect y="4" width="12" height="4" fill="#ffd500"/></svg><a>Leaflet</a> | © <a>OpenStreetMap</a></div>
  </div>
</div>
<div id="edge"></div>
</body>
</html>
